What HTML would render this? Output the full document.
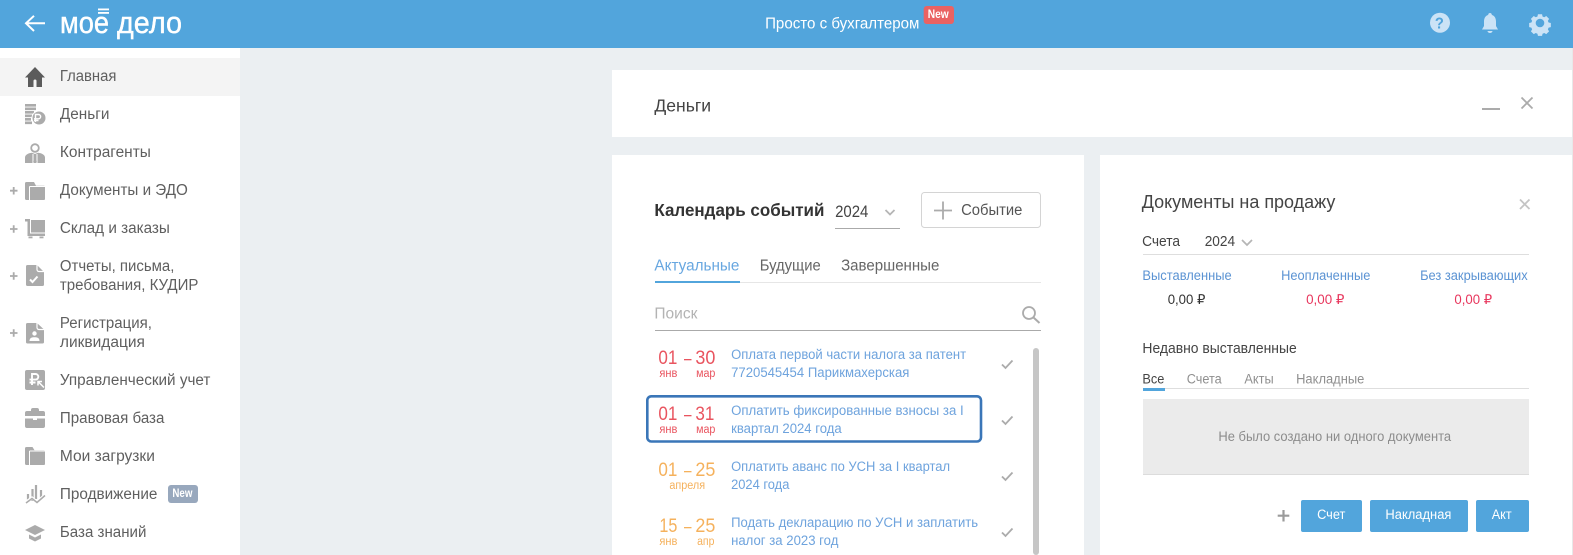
<!DOCTYPE html>
<html lang="ru"><head><meta charset="utf-8"><title>Моё дело</title>
<style>
html,body{margin:0;padding:0;width:1573px;height:555px;overflow:hidden;background:#fff}
svg{display:block}
text{font-family:"Liberation Sans",sans-serif;font-size:15px;fill:#5c5c5c;transform:translateX(-.6px)}
.s{font-size:15.5px;fill:#5f5f5f}
.l{font-size:13.500px;fill:#6ea3dd}
.m{font-size:11.500px}
.d{font-size:19.5px}
.r{fill:#e9545f}.o{fill:#f5b15c}
.t{font-size:13.500px;fill:#8f8f8f}
.b{font-size:13.500px;fill:#5b93d3}
</style></head><body>
<svg width="1573" height="555" viewBox="0 0 1573 555" xmlns="http://www.w3.org/2000/svg">
<rect width="1573" height="555" fill="#fff"/>
<rect x="240" y="48" width="1333" height="507" fill="#ebeff2"/>
<rect width="1573" height="48" fill="#52a5dc"/>
<rect y="58" width="240" height="38" fill="#f4f4f4"/>

<!-- header -->
<path d="M45 23.300H26M34 15.800L26 23.300 34 31" fill="none" stroke="#fff" stroke-width="2"/>
<text x="60.600" y="33" textLength="49" lengthAdjust="spacingAndGlyphs" stroke="#fff" stroke-width=".4" style="font-size:31px;fill:#fff">мое</text>
<text x="117.600" y="33" textLength="65" lengthAdjust="spacingAndGlyphs" stroke="#fff" stroke-width=".4" style="font-size:31px;fill:#fff">дело</text>
<rect x="98" y="8.500" width="11" height="1.800" fill="#fff"/><rect x="98" y="12" width="11" height="1.800" fill="#fff"/>
<text x="765.700" y="28.300" textLength="154.300" lengthAdjust="spacingAndGlyphs" style="font-size:15.5px;fill:#fff">Просто с бухгалтером</text>
<rect x="923.700" y="6" width="30.300" height="18" rx="3" fill="#ea6262"/>
<text x="928.300" y="18" textLength="21" lengthAdjust="spacingAndGlyphs" style="font-size:11.500px;font-weight:bold;fill:#fff">New</text>
<circle cx="1440" cy="22.700" r="10" fill="#cbe3f6"/>
<text x="1435.500" y="28.500" textLength="9" lengthAdjust="spacingAndGlyphs" style="font-size:16px;font-weight:bold;fill:#52a5dc">?</text>
<path d="M1490 13a1.800 1.800 0 0 1 1.800 1.900c3 1 4.200 3.600 4.200 6.600v4.500l2 3.500h-16l2-3.500v-4.500c0-3 1.200-5.600 4.200-6.600a1.800 1.800 0 0 1 1.800-1.900zM1487.500 31h5a2.500 2 0 0 1-5 0z" fill="#cbe3f6"/>
<path d="M1537.500 13h5l.6 2.700 2.100.9 2.400-1.500 3.500 3.500-1.500 2.400.9 2.100 2.700.6v5l-2.700.6-.9 2.100 1.500 2.400-3.500 3.500-2.400-1.500-2.100.9-.6 2.700h-5l-.6-2.700-2.100-.9-2.400 1.500-3.500-3.500 1.500-2.400-.9-2.100-2.700-.6v-5l2.700-.6.9-2.100-1.500-2.400 3.500-3.500 2.400 1.500 2.100-.9z" fill="#cbe3f6" transform="translate(0 -3) translate(1540 23) scale(.82) translate(-1540 -20)"/>
<circle cx="1540" cy="23" r="4.300" fill="#52a5dc"/>

<!-- sidebar icons -->
<path d="M35 67L25 77.500h3V87h5.500v-6a1.500 1.500 0 0 1 3 0v6H42v-9.500h3z" fill="#5b5b5b"/>
<g fill="#ababab">
<path d="M25 104h11v2.600H25zM25 107.500h11v2.600H25zM25 111h9v2.600h-9zM25 114.500h7v2.600h-7zM25 118h6v2.600h-6zM25 121.500h7v2.600h-7z"/>
<circle cx="39" cy="118" r="7.500" fill="#fff"/><circle cx="39" cy="118" r="6.500"/>
<path d="M25 163v-5.500c0-2.500 3-4.500 7-4.800l3 1.300 3-1.300c4 .3 7 2.300 7 4.800v5.500z"/>
<circle cx="35" cy="148" r="3.800" fill="none" stroke="#ababab" stroke-width="1.800"/>
<path d="M26.500 182h7.500l2 3.800h8a1 1 0 0 1 1 1V199a1 1 0 0 1-1 1H26.500a1.500 1.500 0 0 1-1.500-1.500v-15a1.500 1.500 0 0 1 1.500-1.500z"/>
<path d="M25 219h5v14.500h15v2.500H27.500v-14.500H25z"/><path d="M31 220h14v12.500H31z"/><rect x="28.500" y="236.500" width="4" height="1.800"/><rect x="39.500" y="236.500" width="4" height="1.800"/>
<path d="M27.500 265h9.500l7 7v12.500a1.500 1.500 0 0 1-1.500 1.500h-15a1.500 1.500 0 0 1-1.500-1.500v-18a1.500 1.500 0 0 1 1.500-1.500z"/>
<path d="M27.500 323h9.500l7 6.500V342a1.500 1.500 0 0 1-1.500 1.500h-15a1.500 1.500 0 0 1-1.500-1.500v-17.500a1.500 1.500 0 0 1 1.500-1.500z"/>
<rect x="25" y="370" width="20" height="20" rx="2"/>
<path d="M25 416h20v-3a2 2 0 0 0-2-2h-4v-1a2 2 0 0 0-2-2h-4a2 2 0 0 0-2 2v1h-4a2 2 0 0 0-2 2zM25 418.500h8v1.500h4v-1.500h8v7.500a2 2 0 0 1-2 2H27a2 2 0 0 1-2-2z"/>
<path d="M26.500 447h6l2 3.300h9.500a1 1 0 0 1 1 1V464a1 1 0 0 1-1 1H26.500a1.500 1.500 0 0 1-1.500-1.500v-15a1.500 1.500 0 0 1 1.500-1.500z"/>
<path d="M25 530l10-5 10 5-10 5zM29 534.500l6 3 6-3v4l-6 3-6-3z"/>
</g>
<g fill="none" stroke="#fff">
<path d="M35.500 122v-7.500h3a2 2 0 0 1 0 4.300h-4.500M34 120.500h4.500" stroke-width="1.400"/>
<path d="M33 154v9M37 154v9" stroke-width="1"/>
<path d="M29.500 186.500V200M29.500 186.500h15.500" stroke-width="1"/>
<path d="M29.500 451V465M29.500 451h15.500" stroke-width="1"/>
<path d="M30 279.500l2.500 2.500 5-5.500" stroke-width="2"/>
<path d="M37 264.500v5a2 2 0 0 0 2 2h5.500" stroke-width="1.200"/><path d="M37 322.500v5a2 2 0 0 0 2 2h5.500" stroke-width="1.200"/>
<path d="M32 385v-11h3.500a2.800 2.800 0 0 1 0 5.600h-6M29.500 382.500h6" stroke-width="1.900"/>
<path d="M38 381.500l6 6M38 385.500v-4h4" stroke-width="1.500"/>
</g>
<path d="M34 154h2l.5 2-.5 1 .8 5h-3.600l.8-5-.5-1z" fill="#ababab"/>
<circle cx="34.500" cy="333.500" r="2.200" fill="#fff"/><path d="M29.500 341c0-3 2-3.800 5-3.800s5 .8 5 3.800z" fill="#fff"/>
<path d="M28 494v8M32.500 489v12M36 485v14M41 490v8" stroke="#ababab" stroke-width="2.200" fill="none"/>
<path d="M26 502l6 -4 5 4 8-7" stroke="#fff" stroke-width="3" fill="none"/><path d="M26 503l6-4.500 5 4 8-7" stroke="#ababab" stroke-width="1.500" fill="none"/>
<path d="M10 190.700h7.500M13.700 187v7.500M10 229h7.500M13.700 225.200v7.500M10 276h7.500M13.700 272.200v7.500M10 333h7.500M13.700 329.200v7.500" stroke="#ababab" stroke-width="1.800"/>

<!-- sidebar labels -->
<text class="s" x="60.500" y="81" textLength="56.500" lengthAdjust="spacingAndGlyphs">Главная</text>
<text class="s" x="60.500" y="119" textLength="49.500" lengthAdjust="spacingAndGlyphs">Деньги</text>
<text class="s" x="60.500" y="157" textLength="91" lengthAdjust="spacingAndGlyphs">Контрагенты</text>
<text class="s" x="60.500" y="195" textLength="128" lengthAdjust="spacingAndGlyphs">Документы и ЭДО</text>
<text class="s" x="60.500" y="233" textLength="110" lengthAdjust="spacingAndGlyphs">Склад и заказы</text>
<text class="s" x="60.500" y="271" textLength="114.500" lengthAdjust="spacingAndGlyphs">Отчеты, письма,</text>
<text class="s" x="60.500" y="290" textLength="138.500" lengthAdjust="spacingAndGlyphs">требования, КУДИР</text>
<text class="s" x="60.500" y="328" textLength="92" lengthAdjust="spacingAndGlyphs">Регистрация,</text>
<text class="s" x="60.500" y="347" textLength="85" lengthAdjust="spacingAndGlyphs">ликвидация</text>
<text class="s" x="60.500" y="385" textLength="150.500" lengthAdjust="spacingAndGlyphs">Управленческий учет</text>
<text class="s" x="60.500" y="423" textLength="104.500" lengthAdjust="spacingAndGlyphs">Правовая база</text>
<text class="s" x="60.500" y="461" textLength="95" lengthAdjust="spacingAndGlyphs">Мои загрузки</text>
<text class="s" x="60.500" y="499" textLength="97.500" lengthAdjust="spacingAndGlyphs">Продвижение</text>
<rect x="168" y="485" width="30" height="18" rx="3" fill="#98a8bd"/>
<text x="173" y="497" textLength="20" lengthAdjust="spacingAndGlyphs" style="font-size:11.500px;font-weight:bold;fill:#fff">New</text>
<text class="s" x="60.500" y="537" textLength="86.500" lengthAdjust="spacingAndGlyphs">База знаний</text>

<!-- panels -->
<rect x="612" y="70" width="960" height="67" fill="#fff"/>
<rect x="612" y="155" width="472" height="400" fill="#fff"/>
<rect x="1100" y="155" width="472" height="400" fill="#fff"/>
<rect x="1572" y="48" width="1" height="507" fill="#e8e8e8"/>
<text x="655" y="111.500" textLength="56.700" lengthAdjust="spacingAndGlyphs" style="font-size:17.500px;fill:#444">Деньги</text>
<rect x="1482" y="108" width="18" height="2" fill="#ababab"/>
<path d="M1521.500 97.500l11 11M1532.500 97.500l-11 11" stroke="#ababab" stroke-width="1.800"/>

<!-- calendar card -->
<text x="655" y="216" textLength="170" lengthAdjust="spacingAndGlyphs" style="font-size:17.500px;font-weight:bold;fill:#333">Календарь событий</text>
<text x="835.700" y="217" textLength="33.300" lengthAdjust="spacingAndGlyphs" style="font-size:16.500px;fill:#444">2024</text>
<path d="M885.500 210l4.500 4.500 4.500-4.500" fill="none" stroke="#b5b5b5" stroke-width="1.800"/>
<rect x="835" y="228" width="65" height="1" fill="#aaa"/>
<rect x="921.500" y="192.500" width="119" height="35" rx="3" fill="#fff" stroke="#d4d4d4"/>
<path d="M934 210.500h18M943 201.500v18" stroke="#ababab" stroke-width="1.800"/>
<text x="961.700" y="215" textLength="61.300" lengthAdjust="spacingAndGlyphs" style="font-size:15.500px;fill:#555">Событие</text>

<text x="655" y="270.500" textLength="85" lengthAdjust="spacingAndGlyphs" style="font-size:15.500px;fill:#68a7e0">Актуальные</text>
<text x="760.300" y="270.500" textLength="61" lengthAdjust="spacingAndGlyphs" style="font-size:15.500px;fill:#666">Будущие</text>
<text x="841.700" y="270.500" textLength="98.300" lengthAdjust="spacingAndGlyphs" style="font-size:15.500px;fill:#666">Завершенные</text>
<rect x="655" y="282" width="386" height="1" fill="#e6e6e6"/>
<rect x="655" y="281" width="85" height="2" fill="#52a5dc"/>
<text x="655" y="318.500" textLength="43" lengthAdjust="spacingAndGlyphs" style="font-size:15.500px;fill:#b3b3b3">Поиск</text>
<circle cx="1029" cy="313" r="6" fill="none" stroke="#ababab" stroke-width="1.800"/>
<path d="M1033.500 317.500l6 5.500" stroke="#ababab" stroke-width="2"/>
<rect x="655" y="330" width="386" height="1" fill="#aaa"/>

<rect x="1033" y="348" width="6" height="207" rx="3" fill="#c6c6c6"/>
<rect x="647.300" y="396.300" width="333.700" height="45.200" rx="4" fill="#fff" stroke="#3a76b8" stroke-width="2.600"/>

<text class="d r" x="659" y="364" textLength="19" lengthAdjust="spacingAndGlyphs">01</text>
<text class="d r" x="696" y="364" textLength="20" lengthAdjust="spacingAndGlyphs">30</text>
<rect x="684" y="359" width="7.500" height="1.300" fill="#e9545f"/>
<text class="m r" x="660" y="377" textLength="18" lengthAdjust="spacingAndGlyphs">янв</text>
<text class="m r" x="696.700" y="377" textLength="19.300" lengthAdjust="spacingAndGlyphs">мар</text>
<text class="l" x="731.700" y="359" textLength="235" lengthAdjust="spacingAndGlyphs">Оплата первой части налога за патент</text>
<text class="l" x="731.700" y="377" textLength="178.300" lengthAdjust="spacingAndGlyphs">7720545454 Парикмахерская</text>

<text class="d r" x="659" y="420" textLength="19" lengthAdjust="spacingAndGlyphs">01</text>
<text class="d r" x="696" y="420" textLength="19" lengthAdjust="spacingAndGlyphs">31</text>
<rect x="684" y="415" width="7.500" height="1.300" fill="#e9545f"/>
<text class="m r" x="660" y="433" textLength="18" lengthAdjust="spacingAndGlyphs">янв</text>
<text class="m r" x="696.700" y="433" textLength="19.300" lengthAdjust="spacingAndGlyphs">мар</text>
<text class="l" x="731.700" y="415" textLength="232.600" lengthAdjust="spacingAndGlyphs">Оплатить фиксированные взносы за I</text>
<text class="l" x="731.700" y="433" textLength="110.600" lengthAdjust="spacingAndGlyphs">квартал 2024 года</text>

<text class="d o" x="659" y="476" textLength="19" lengthAdjust="spacingAndGlyphs">01</text>
<text class="d o" x="696" y="476" textLength="20" lengthAdjust="spacingAndGlyphs">25</text>
<rect x="684" y="471" width="7.500" height="1.300" fill="#f5b15c"/>
<text class="m o" x="670" y="489" textLength="35.700" lengthAdjust="spacingAndGlyphs">апреля</text>
<text class="l" x="731.700" y="471" textLength="219" lengthAdjust="spacingAndGlyphs">Оплатить аванс по УСН за I квартал</text>
<text class="l" x="731.700" y="489" textLength="58.300" lengthAdjust="spacingAndGlyphs">2024 года</text>

<text class="d o" x="660" y="532" textLength="18" lengthAdjust="spacingAndGlyphs">15</text>
<text class="d o" x="696" y="532" textLength="20" lengthAdjust="spacingAndGlyphs">25</text>
<rect x="684" y="527" width="7.500" height="1.300" fill="#f5b15c"/>
<text class="m o" x="660" y="545" textLength="18" lengthAdjust="spacingAndGlyphs">янв</text>
<text class="m o" x="697.700" y="545" textLength="17.300" lengthAdjust="spacingAndGlyphs">апр</text>
<text class="l" x="731.700" y="527" textLength="247" lengthAdjust="spacingAndGlyphs">Подать декларацию по УСН и заплатить</text>
<text class="l" x="731.700" y="545" textLength="107.300" lengthAdjust="spacingAndGlyphs">налог за 2023 год</text>

<path d="M1002 364.500l3.500 3.500 7-7.500M1002 420.500l3.500 3.500 7-7.500M1002 476.500l3.500 3.500 7-7.500M1002 532.500l3.500 3.500 7-7.500" fill="none" stroke="#ababab" stroke-width="1.800"/>

<!-- documents card -->
<text x="1142.300" y="208" textLength="193.700" lengthAdjust="spacingAndGlyphs" style="font-size:18.500px;fill:#444">Документы на продажу</text>
<path d="M1520 199.500l9.500 9.500M1529.500 199.500l-9.500 9.500" stroke="#c4c4c4" stroke-width="1.800"/>
<text x="1142.700" y="246" textLength="38" lengthAdjust="spacingAndGlyphs" style="font-size:14.500px;fill:#444">Счета</text>
<text x="1205.300" y="246" textLength="30.400" lengthAdjust="spacingAndGlyphs" style="font-size:14.500px;fill:#444">2024</text>
<path d="M1242 240l5 5 5-5" fill="none" stroke="#b5b5b5" stroke-width="1.700"/>
<rect x="1143" y="254" width="386" height="1" fill="#dedede"/>
<text class="b" x="1143" y="280" textLength="89.300" lengthAdjust="spacingAndGlyphs">Выставленные</text>
<text class="b" x="1281.700" y="280" textLength="89.300" lengthAdjust="spacingAndGlyphs">Неоплаченные</text>
<text class="b" x="1420.700" y="280" textLength="107.600" lengthAdjust="spacingAndGlyphs">Без закрывающих</text>
<text x="1168.300" y="304" textLength="37.700" lengthAdjust="spacingAndGlyphs" style="font-size:13.500px;fill:#333">0,00 ₽</text>
<text x="1306.700" y="304" textLength="38.300" lengthAdjust="spacingAndGlyphs" style="font-size:13.500px;fill:#e8365d">0,00 ₽</text>
<text x="1455" y="304" textLength="37.700" lengthAdjust="spacingAndGlyphs" style="font-size:13.500px;fill:#e8365d">0,00 ₽</text>
<text x="1143" y="353" textLength="154.300" lengthAdjust="spacingAndGlyphs" style="font-size:14.500px;fill:#444">Недавно выставленные</text>
<text x="1143" y="383.300" textLength="22" lengthAdjust="spacingAndGlyphs" style="font-size:13.500px;fill:#444">Все</text>
<text class="t" x="1187.300" y="383.300" textLength="35" lengthAdjust="spacingAndGlyphs">Счета</text>
<text class="t" x="1245" y="383.300" textLength="29.300" lengthAdjust="spacingAndGlyphs">Акты</text>
<text class="t" x="1296.700" y="383.300" textLength="68.300" lengthAdjust="spacingAndGlyphs">Накладные</text>
<rect x="1143" y="388" width="386" height="1" fill="#dedede"/>
<rect x="1143" y="388" width="22" height="3" fill="#52a5dc"/>
<rect x="1143" y="399" width="386" height="75" fill="#ebebeb"/>
<rect x="1143" y="474" width="386" height="1" fill="#dcdcdc"/>
<text x="1219" y="441" textLength="232.700" lengthAdjust="spacingAndGlyphs" style="font-size:13.500px;fill:#8c8c8c">Не было создано ни одного документа</text>
<path d="M1277.700 515.700h11.600M1283.500 510v11.500" stroke="#9b9b9b" stroke-width="2.200"/>
<rect x="1301" y="500" width="61" height="32" rx="2" fill="#52a5dc"/>
<rect x="1370" y="500" width="98" height="32" rx="2" fill="#52a5dc"/>
<rect x="1476" y="500" width="53" height="32" rx="2" fill="#52a5dc"/>
<text x="1317.700" y="519" textLength="28.300" lengthAdjust="spacingAndGlyphs" style="font-size:13.500px;fill:#fff">Счет</text>
<text x="1386" y="519" textLength="66" lengthAdjust="spacingAndGlyphs" style="font-size:13.500px;fill:#fff">Накладная</text>
<text x="1492.300" y="519" textLength="20" lengthAdjust="spacingAndGlyphs" style="font-size:13.500px;fill:#fff">Акт</text>
</svg>
</body></html>
